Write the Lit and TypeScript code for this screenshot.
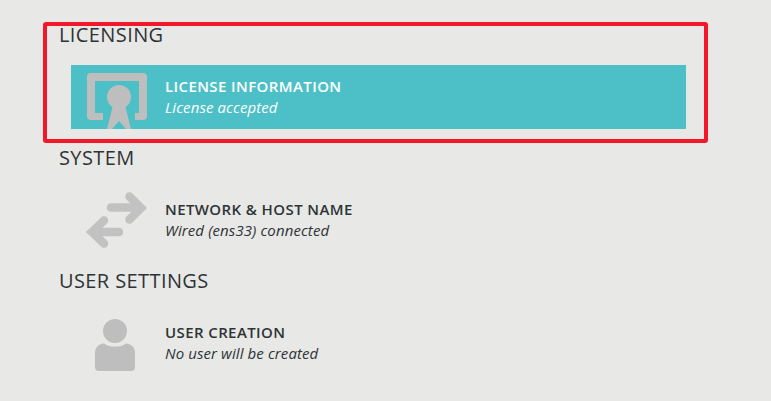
import { LitElement, html, css, svg } from "lit";
import { customElement } from "lit/decorators.js";

const cert = svg`<svg class="icon" width="64" height="64" viewBox="0 0 64 64">
  <path fill="#bebebe" d="M6 8H58a4 4 0 0 1 4 4V51a4 4 0 0 1-4 4H50V48H54V16H10V48H18V55H6a4 4 0 0 1-4-4V12a4 4 0 0 1 4-4Z"/>
  <circle cx="34" cy="32" r="12" fill="#bebebe"/>
  <path fill="#bebebe" d="M28 40H40L46 64H41L34 56L27 64H22Z"/>
</svg>`;

const arrows = svg`<svg class="icon" width="64" height="64" viewBox="0 0 64 64">
  <g fill="none" stroke="#c2c2c2" stroke-width="8.500" stroke-linecap="round" stroke-linejoin="miter">
    <path d="M26 19.500H54"/>
    <path d="M9 44H34"/>
    <path d="M44.500 8.500L56 20L44.500 31.500"/>
    <path d="M19 32.500L7 44L19 55.500"/>
  </g>
</svg>`;

const user = svg`<svg class="icon" width="64" height="64" viewBox="0 0 64 64">
  <circle cx="30" cy="20" r="12" fill="#bebebe"/>
  <path fill="#bebebe" d="M10 42C10 37 13 33 19 32.500C22 35 26 35.500 30 35.500C34 35.500 38 35 41 32.500C47 33 50 37 50 42V56A4 4 0 0 1 46 60H14A4 4 0 0 1 10 56Z"/>
</svg>`;

@customElement("app-root")
export class AppRoot extends LitElement {
  static styles = css`
    :host {
      display: block;
      position: relative;
      width: 771px;
      height: 401px;
      overflow: hidden;
      background: #e8e8e6;
      color: #2e3436;
      font-family: "Open Sans", "Noto Sans", sans-serif;
    }
    .page {
      display: flex;
      flex-direction: column;
      gap: 18px;
      padding: 24px 0 0 59px;
    }
    .title {
      height: 24px;
      line-height: 22px;
      font-size: 20px;
      font-weight: 400;
      letter-spacing: 0.4px;
      margin-bottom: 17px;
    }
    .row {
      display: flex;
      width: 615px;
      height: 64px;
      margin-left: 12px;
      overflow: hidden;
    }
    .row.on {
      background: #4dc0c7;
      color: #fff;
    }
    .icon {
      flex: none;
      display: block;
      margin-left: 14px;
    }
    .text {
      margin-left: 16px;
      padding-top: 11px;
    }
    .name {
      font-size: 15px;
      font-weight: 600;
      letter-spacing: 0.4px;
      line-height: 21px;
    }
    .status {
      font-size: 15px;
      font-style: italic;
      letter-spacing: 0.1px;
      line-height: 21px;
    }
    .box {
      position: absolute;
      left: 43px;
      top: 22px;
      width: 665px;
      height: 121px;
      box-sizing: border-box;
      border: 4px solid #f2182a;
      border-radius: 3px;
    }
  `;

  render() {
    return html`
      <div class="page">
        <section>
          <div class="title">LICENSING</div>
          <div class="row on">
            ${cert}
            <div class="text">
              <div class="name">LICENSE INFORMATION</div>
              <div class="status">License accepted</div>
            </div>
          </div>
        </section>
        <section>
          <div class="title">SYSTEM</div>
          <div class="row">
            ${arrows}
            <div class="text">
              <div class="name">NETWORK &amp; HOST NAME</div>
              <div class="status">Wired (ens33) connected</div>
            </div>
          </div>
        </section>
        <section>
          <div class="title">USER SETTINGS</div>
          <div class="row">
            ${user}
            <div class="text">
              <div class="name">USER CREATION</div>
              <div class="status">No user will be created</div>
            </div>
          </div>
        </section>
      </div>
      <div class="box"></div>
    `;
  }
}
